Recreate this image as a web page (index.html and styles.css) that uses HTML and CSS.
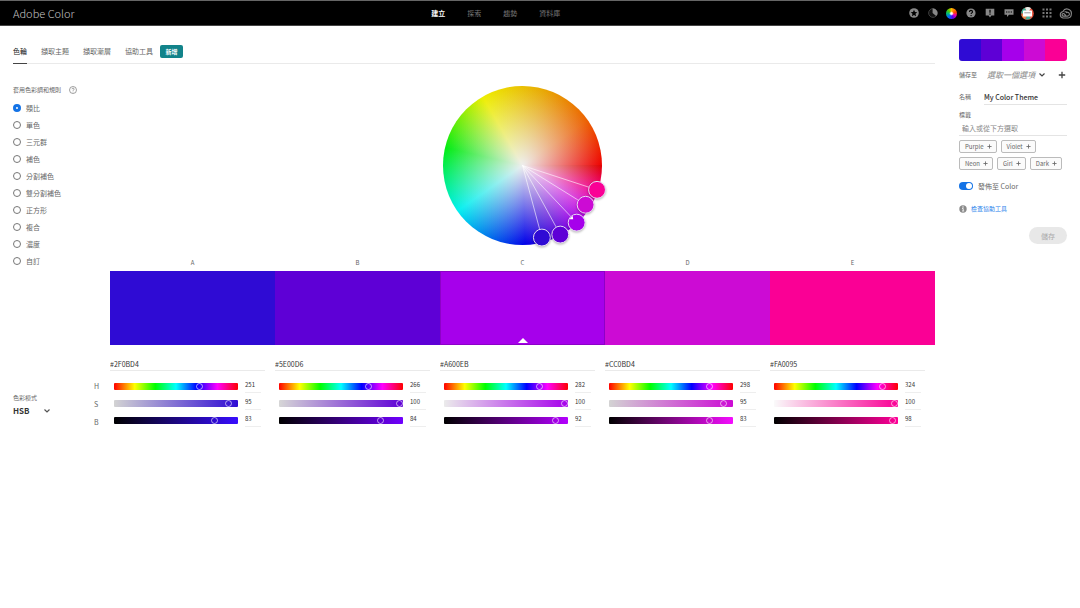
FILE: index.html
```html
<!DOCTYPE html>
<html lang="zh-Hant">
<head>
<meta charset="utf-8">
<meta name="viewport" content="width=device-width, initial-scale=1">
<title>Adobe Color</title>
<link rel="stylesheet" href="styles.css">
</head>
<body>
<header class="topbar">
  <a class="brand" href="#">Adobe Color</a>
  <nav class="nav">
    <a class="nav-link active" href="#">建立</a>
    <a class="nav-link" href="#">探索</a>
    <a class="nav-link" href="#">趨勢</a>
    <a class="nav-link" href="#">資料庫</a>
  </nav>
  <div class="tools">
    <button class="tool" aria-label="Favorites"><svg width="10" height="10" viewBox="0 0 10 10"><circle cx="5" cy="5" r="4.8" fill="#888"/><path d="M5 1.8l1 2.200 2.300.2-1.800 1.600.6 2.400L5 6.900 2.900 8.200l.6-2.400-1.800-1.600L4 4z" fill="#000"/></svg></button>
    <button class="tool" aria-label="Contrast"><svg width="10" height="10" viewBox="0 0 10 10"><circle cx="5" cy="5" r="4.400" fill="#111" stroke="#555" stroke-width=".7"/><path d="M4.600.6a4.400 4.400 0 0 1 3.500 7.500L4.600 5z" fill="#888"/></svg></button>
    <button class="tool" aria-label="Color wheel"><span class="mini-wheel"></span></button>
    <button class="tool" aria-label="Help"><svg width="10" height="10" viewBox="0 0 10 10"><circle cx="5" cy="5" r="4.600" fill="#888"/><path d="M3.500 3.900c0-2 3-2 3 0 0 1-1.400 1-1.400 2" fill="none" stroke="#000" stroke-width="1.100"/><circle cx="5.100" cy="7.600" r=".7"/></svg></button>
    <button class="tool" aria-label="Announcements"><svg width="10" height="10" viewBox="0 0 10 10"><path d="M.7.800h8.600v6.700H6.400L5 9.500 3.600 7.500H.7z" fill="#888"/><path d="M5 1.800v3M5 5.600v1.100" stroke="#000" stroke-width="1.200"/></svg></button>
    <button class="tool" aria-label="Feedback"><svg width="10" height="10" viewBox="0 0 10 10"><path d="M.5 1.300h9v5.400H5L3 9V6.700H.5z" fill="#888"/><path d="M2 4h1.300M4.300 4h1.300M6.700 4H8" stroke="#000" stroke-width="1.200"/></svg></button>
    <button class="tool" aria-label="Account"><svg width="13" height="13" viewBox="0 0 13 13"><circle cx="6.500" cy="6.500" r="6.300" fill="#e8553f"/><path d="M.2 6.500A6.300 6.300 0 0 1 4 .7L6.500 6.500z" fill="#40b59b"/><path d="M4 .7a6.300 6.300 0 0 1 6 .3L6.500 6z" fill="#e6eee9"/><path d="M.3 7.500a6.300 6.300 0 0 0 4 4.800L6 7z" fill="#e88a4c"/><path d="M4.300 12.300a6.300 6.300 0 0 0 5.500-1L7 7z" fill="#40b59b"/><rect x="2" y="3.500" width="9" height="6" rx=".5" fill="#fff"/><path d="M3.300 5.800h6.400" stroke="#999" stroke-width="1"/></svg></button>
    <button class="tool" aria-label="Apps"><svg width="10" height="10" viewBox="0 0 10 10" fill="#777"><path d="M.5.500h2v2h-2zM4 .5h2v2H4zM7.500.500h2v2h-2zM.5 4h2v2h-2zM4 4h2v2H4zM7.500 4h2v2h-2zM.5 7.500h2v2h-2zM4 7.500h2v2H4zM7.500 7.500h2v2h-2z"/></svg></button>
    <button class="tool" aria-label="Creative Cloud"><svg width="13" height="11" viewBox="0 0 13 11" fill="none" stroke="#888" stroke-width="1.100"><path d="M4 10h5a3.900 3.900 0 0 0 3.300-3.800A4.400 4.400 0 0 0 4 3.500 3.300 3.300 0 0 0 4 10z"/><path d="M6.800 7.500L5.500 6.200a1.300 1.300 0 1 0-1.400 1.900h4.300a1.900 1.900 0 1 0-1.300-3.200M5.500 4a2.500 2.500 0 0 1 3 .8"/></svg></button>
  </div>
</header>

<main class="layout">
  <section class="workspace">
    <nav class="tabs">
      <a class="tab current" href="#">色輪</a>
      <a class="tab" href="#">擷取主題</a>
      <a class="tab" href="#">擷取漸層</a>
      <a class="tab" href="#">協助工具 <span class="new-badge">新增</span></a>
    </nav>
    <div class="studio">
      <fieldset class="rules">
        <legend class="rules-title">套用色彩調和規則 <svg width="8" height="8" viewBox="0 0 8 8"><circle cx="4" cy="4" r="3.500" fill="none" stroke="#777" stroke-width=".7"/><path d="M3 3.200c0-1.400 2.100-1.400 2.100 0C5.100 4 4 4 4 4.800" fill="none" stroke="#777" stroke-width=".7"/><circle cx="4" cy="5.900" r=".45" fill="#777"/></svg></legend>
        <label class="rule"><input type="radio" name="rule" checked>類比</label>
        <label class="rule"><input type="radio" name="rule">單色</label>
        <label class="rule"><input type="radio" name="rule">三元群</label>
        <label class="rule"><input type="radio" name="rule">補色</label>
        <label class="rule"><input type="radio" name="rule">分割補色</label>
        <label class="rule"><input type="radio" name="rule">雙分割補色</label>
        <label class="rule"><input type="radio" name="rule">正方形</label>
        <label class="rule"><input type="radio" name="rule">複合</label>
        <label class="rule"><input type="radio" name="rule">濃度</label>
        <label class="rule"><input type="radio" name="rule">自訂</label>
      </fieldset>
      <div class="stage">
        <div class="wheel">
          <svg class="spokes" viewBox="0 0 160 160">
            <path d="M80 80L155 104.500M80 80L143.500 119.500M80 80L134.500 137.500M80 80L118 149.500M80 80L99.500 152.500" stroke="#fff" stroke-opacity=".6"/>
            <g class="handles">
              <circle cx="155" cy="104.500" r="8.500" fill="#fa0095"/>
              <circle cx="143.500" cy="119.500" r="8.500" fill="#cc0bd4"/>
              <circle cx="134.500" cy="137.500" r="8.500" fill="#a600eb"/>
              <circle cx="118" cy="149.500" r="8.500" fill="#5e00d6"/>
              <circle cx="99.500" cy="152.500" r="8.500" fill="#2f0bd4"/>
            </g>
            <path d="M127 134l3.500-3.500.5 3.500z" fill="#fff"/>
          </svg>
        </div>
        <div class="swatches">
          <div class="swatch-col"><span>A</span><div class="swatch color-a"></div></div>
          <div class="swatch-col"><span>B</span><div class="swatch color-b"></div></div>
          <div class="swatch-col"><span>C</span><div class="swatch color-c base"></div></div>
          <div class="swatch-col"><span>D</span><div class="swatch color-d"></div></div>
          <div class="swatch-col"><span>E</span><div class="swatch color-e"></div></div>
        </div>
      </div>
      <div class="mode">
        <div class="mode-picker">
          <label for="mode">色彩模式</label>
          <div class="select-wrap"><select id="mode"><option>HSB</option></select><svg class="chevron" viewBox="0 0 8 6"><path d="M1.500 1.500L4 4l2.500-2.500" fill="none" stroke="#555" stroke-width="1.200"/></svg></div>
        </div>
        <div class="channels"><span>H</span><span>S</span><span>B</span></div>
      </div>
      <div class="editors">
        <div class="editor color-a">
          <input class="hex" aria-label="A hex" value="#2F0BD4">
          <div class="channel"><input class="hue" type="range" max="360" value="251" aria-label="A hue"><input class="num" value="251" aria-label="A hue value"></div>
          <div class="channel"><input class="sat" type="range" max="100" value="95" aria-label="A saturation"><input class="num" value="95" aria-label="A saturation value"></div>
          <div class="channel"><input class="bri" type="range" max="100" value="83" aria-label="A brightness"><input class="num" value="83" aria-label="A brightness value"></div>
        </div>
        <div class="editor color-b">
          <input class="hex" aria-label="B hex" value="#5E00D6">
          <div class="channel"><input class="hue" type="range" max="360" value="266" aria-label="B hue"><input class="num" value="266" aria-label="B hue value"></div>
          <div class="channel"><input class="sat" type="range" max="100" value="100" aria-label="B saturation"><input class="num" value="100" aria-label="B saturation value"></div>
          <div class="channel"><input class="bri" type="range" max="100" value="84" aria-label="B brightness"><input class="num" value="84" aria-label="B brightness value"></div>
        </div>
        <div class="editor color-c">
          <input class="hex" aria-label="C hex" value="#A600EB">
          <div class="channel"><input class="hue" type="range" max="360" value="282" aria-label="C hue"><input class="num" value="282" aria-label="C hue value"></div>
          <div class="channel"><input class="sat" type="range" max="100" value="100" aria-label="C saturation"><input class="num" value="100" aria-label="C saturation value"></div>
          <div class="channel"><input class="bri" type="range" max="100" value="92" aria-label="C brightness"><input class="num" value="92" aria-label="C brightness value"></div>
        </div>
        <div class="editor color-d">
          <input class="hex" aria-label="D hex" value="#CC0BD4">
          <div class="channel"><input class="hue" type="range" max="360" value="298" aria-label="D hue"><input class="num" value="298" aria-label="D hue value"></div>
          <div class="channel"><input class="sat" type="range" max="100" value="95" aria-label="D saturation"><input class="num" value="95" aria-label="D saturation value"></div>
          <div class="channel"><input class="bri" type="range" max="100" value="83" aria-label="D brightness"><input class="num" value="83" aria-label="D brightness value"></div>
        </div>
        <div class="editor color-e">
          <input class="hex" aria-label="E hex" value="#FA0095">
          <div class="channel"><input class="hue" type="range" max="360" value="324" aria-label="E hue"><input class="num" value="324" aria-label="E hue value"></div>
          <div class="channel"><input class="sat" type="range" max="100" value="100" aria-label="E saturation"><input class="num" value="100" aria-label="E saturation value"></div>
          <div class="channel"><input class="bri" type="range" max="100" value="98" aria-label="E brightness"><input class="num" value="98" aria-label="E brightness value"></div>
        </div>
      </div>
    </div>
  </section>

  <aside class="panel">
    <div class="preview"><i class="color-a"></i><i class="color-b"></i><i class="color-c"></i><i class="color-d"></i><i class="color-e"></i></div>
    <div class="save-to">
      <label for="library">儲存至</label>
      <div class="select-wrap"><select id="library"><option>選取一個選項</option></select><svg class="chevron" viewBox="0 0 8 6"><path d="M1.500 1.500L4 4l2.500-2.500" fill="none" stroke="#444" stroke-width="1.200"/></svg></div>
      <button class="add" aria-label="Add library"><svg width="8" height="8" viewBox="0 0 8 8"><path d="M4 .8v6.400M.8 4h6.400" stroke="#444" stroke-width="1.300"/></svg></button>
    </div>
    <div class="name-row"><label for="name">名稱</label><input id="name" value="My Color Theme"></div>
    <div class="tag-field"><label for="tags">標籤</label><input id="tags" placeholder="輸入或從下方選取"></div>
    <div class="chips">
      <button class="chip">Purple <svg viewBox="0 0 6 6"><path d="M3 .5v5M.5 3h5"/></svg></button>
      <button class="chip">Violet <svg viewBox="0 0 6 6"><path d="M3 .5v5M.5 3h5"/></svg></button>
      <button class="chip">Neon <svg viewBox="0 0 6 6"><path d="M3 .5v5M.5 3h5"/></svg></button>
      <button class="chip">Girl <svg viewBox="0 0 6 6"><path d="M3 .5v5M.5 3h5"/></svg></button>
      <button class="chip">Dark <svg viewBox="0 0 6 6"><path d="M3 .5v5M.5 3h5"/></svg></button>
    </div>
    <label class="publish"><input type="checkbox" role="switch" checked>發佈至 Color</label>
    <a class="check-link" href="#"><svg width="8" height="8" viewBox="0 0 8 8"><circle cx="4" cy="4" r="3.700" fill="#8a8a8a"/><circle cx="4" cy="2" r=".7" fill="#fff"/><path d="M3 3.500h1.200v2.400M3 6h2.200" stroke="#fff" stroke-width=".8" fill="none"/></svg>檢查協助工具</a>
    <button class="save" disabled>儲存</button>
  </aside>
</main>
</body>
</html>
```
FILE: styles.css
```css
* { box-sizing: border-box; }
body {
  margin: 0;
  background: #fff;
  color: #666;
  font: 7px/12px "Noto Sans CJK TC", sans-serif;
}
a { color: inherit; text-decoration: none; }
button, input, select { font: inherit; color: inherit; margin: 0; padding: 0; border: 0; border-radius: 0; background: none; }
svg { display: block; flex: none; }

.color-a { --color: #2f0bd4; --dull: #d3d3d3; --full: #380dff; }
.color-b { --color: #5e00d6; --dull: #d6d6d6; --full: #7000ff; }
.color-c { --color: #a600eb; --dull: #ebebeb; --full: #b400ff; }
.color-d { --color: #cc0bd4; --dull: #d3d3d3; --full: #f50dff; }
.color-e { --color: #fa0095; --dull: #fafafa; --full: #ff0098; }

.topbar {
  display: grid;
  grid-template-columns: minmax(0, 13fr) auto minmax(0, 16fr);
  align-items: center;
  height: 26px;
  padding: 0 5px 0 13px;
  background: #000;
  border-top: 1px solid #666;
  border-bottom: 1px solid #444;
}
.brand { font-size: 11px; font-weight: 300; color: #c4c4c4; }
.nav { display: flex; gap: 22px; }
.nav-link { color: #777; }
.nav-link.active { color: #fff; font-weight: 700; }
.tools { display: flex; justify-content: flex-end; }
.tool { display: flex; justify-content: center; align-items: center; width: 19px; height: 16px; }
.mini-wheel {
  width: 11px;
  height: 11px;
  border-radius: 50%;
  background: radial-gradient(#fff 10%, transparent 30%), conic-gradient(#fb0, #f40 20%, #e0a 32%, #50e 45%, #06f 60%, #0b7 75%, #5c0 88%, #fb0);
}

.layout {
  display: grid;
  grid-template-columns: minmax(0, 1fr) 108px;
  gap: 24px;
  padding: 0 13px;
}
.tabs { display: flex; gap: 14px; height: 38px; border-bottom: 1px solid #eaeaea; }
.tab { display: flex; align-items: center; gap: 7px; padding-top: 12px; margin-bottom: -1px; }
.tab.current { color: #222; border-bottom: 1px solid #444; }
.new-badge { width: 23px; background: #12838a; color: #fff; border-radius: 2px; font-size: 6px; font-weight: 700; text-align: center; line-height: 13px; }

.studio { display: grid; grid-template-columns: 97px minmax(0, 1fr); }
.rules { border: 0; margin: 0; padding: 20px 0 0; min-width: 0; }
.rules-title { float: left; display: flex; align-items: center; gap: 8px; width: 100%; padding: 0; margin-bottom: 3px; font-size: 6px; }
.rule { clear: both; display: flex; align-items: center; gap: 5px; height: 17px; }
.rule input { appearance: none; width: 8px; height: 8px; border: 1px solid #777; border-radius: 50%; }
.rule input:checked { border: 3px solid #1473e6; }

.wheel {
  width: 159px;
  height: 159px;
  margin: 22px auto 10px;
  border-radius: 50%;
  background:
    radial-gradient(closest-side, #eee, rgba(238, 238, 238, .55) 45%, rgba(238, 238, 238, 0)),
    conic-gradient(from 90deg, #e00000 0deg, #f0008c 18deg, #d010e0 33deg, #9a00e8 47deg, #5a00dc 61deg, #2800dc 75deg, #0000e8 88deg, #00f0f0 145deg, #00ec10 193deg, #eeee00 240deg, #e8a800 285deg, #ec6000 325deg, #ee0000 360deg);
}
.spokes { width: 100%; height: 100%; overflow: visible; }
.handles circle { stroke: #e8dcf4; stroke-width: 1; filter: drop-shadow(0 1px 1px rgba(0, 0, 0, .3)); }

.swatches { display: grid; grid-template-columns: repeat(5, minmax(0, 1fr)); }
.swatch-col { text-align: center; font-size: 6px; line-height: 15px; }
.swatch-col span { display: block; padding-bottom: 1px; }
.swatch { height: 74px; background: var(--color); }
.base { display: flex; justify-content: center; align-items: flex-end; padding-bottom: 2px; box-shadow: inset 0 0 0 1px rgba(0, 0, 0, .15); }
.base::after { content: ""; border: 5px solid transparent; border-top: 0; border-bottom-color: #fff; }

.mode { display: flex; justify-content: space-between; }
.mode-picker { padding-top: 47px; font-size: 6px; }
.mode-picker label { display: block; }
.select-wrap { position: relative; }
.select-wrap select { appearance: none; width: 100%; height: 14px; }
.chevron { position: absolute; right: 0; top: 4px; width: 8px; height: 6px; pointer-events: none; }
.mode-picker .select-wrap { width: 38px; }
.mode-picker select { font-size: 8px; font-weight: 700; color: #333; }
.channels { display: flex; flex-direction: column; width: 16px; padding-top: 32px; line-height: 18px; }

.editors { display: grid; grid-template-columns: repeat(5, minmax(0, 1fr)); }
.editor { padding-top: 12px; }
.hex { display: block; width: calc(100% - 10px); height: 14px; margin-bottom: 7px; border-bottom: 1px solid #eaeaea; color: #333; }
.channel { display: flex; align-items: center; gap: 7px; height: 17px; padding: 0 14px 0 4px; }
.channel input[type="range"] { appearance: none; flex: 1; min-width: 0; height: 7px; border-radius: 1px; }
.channel input[type="range"]::-webkit-slider-thumb { appearance: none; width: 7px; height: 7px; border: 1px solid rgba(255, 255, 255, .6); border-radius: 50%; background: transparent; }
.hue { background: linear-gradient(90deg, #f00, #ff0, #0f0, #0ff, #00f, #f0f, #f00); }
.sat { background: linear-gradient(90deg, var(--dull), var(--color)); }
.bri { background: linear-gradient(90deg, #000, var(--full)); }
.num { width: 16px; height: 12px; padding-bottom: 3px; font-size: 6px; line-height: 8px; color: #333; border-bottom: 1px solid #eee; }

.panel { display: flex; flex-direction: column; padding-top: 13px; }
.panel label { font-size: 6px; }
.preview { display: flex; height: 22px; border-radius: 3px; overflow: hidden; }
.preview i { flex: 1; background: var(--color); }
.save-to { display: flex; align-items: center; height: 28px; }
.save-to label { width: 28px; }
.save-to .select-wrap { flex: 1; margin-right: 11px; }
.save-to select { font-size: 8px; font-style: italic; color: #888; }
.add { padding: 1px; }
.name-row { display: flex; align-items: center; height: 16px; }
.name-row label { width: 25px; flex: none; }
.name-row input { width: 100%; min-width: 0; height: 16px; border-bottom: 1px solid #e4e4e4; color: #333; font-weight: 500; }
.tag-field { display: flex; flex-direction: column; padding-top: 4px; }
.tag-field input { height: 15px; padding-left: 3px; border-bottom: 1px solid #e4e4e4; }
.tag-field input::placeholder { color: #888; }
.chips { display: flex; flex-wrap: wrap; gap: 4px; padding-top: 4px; }
.chip { display: flex; align-items: center; gap: 3px; height: 13px; padding: 0 4px 0 5px; border: 1px solid #bbb; border-radius: 2px; font-size: 6px; background: #fbfbfb; }
.chip svg { width: 5px; height: 5px; stroke: #666; }
.panel .publish { display: flex; align-items: center; gap: 5px; margin-top: 10px; font-size: 7px; }
.publish input { appearance: none; display: flex; justify-content: flex-end; width: 14px; height: 8px; padding: 1px; border-radius: 4px; background: #1473e6; }
.publish input::before { content: ""; width: 6px; height: 6px; border-radius: 50%; background: #fff; }
.check-link { display: flex; align-items: center; gap: 4px; margin-top: 11px; font-size: 6px; color: #2680eb; }
.save { align-self: flex-end; width: 38px; height: 17px; margin-top: 12px; border-radius: 9px; background: #e8e8e8; color: #aaa; }
```
